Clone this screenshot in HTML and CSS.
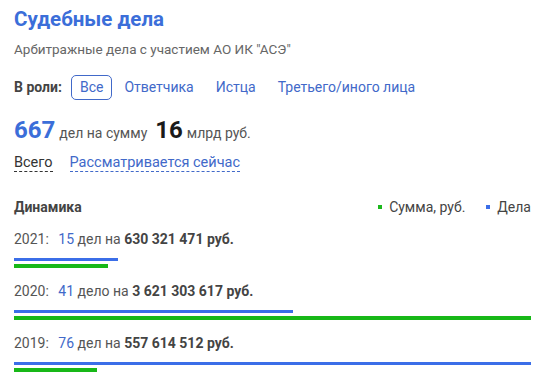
FILE: index.html
```html
<!DOCTYPE html>
<html lang="ru">
<head>
    <meta charset="UTF-8" />
    <title>Судебные дела</title>
    <link rel="stylesheet" href="styles.css">
</head>
<body>
    <section class="cases">
        <h1 class="cases-title">Судебные дела</h1>
        <p class="cases-sub">Арбитражные дела с участием АО ИК "АСЭ"</p>

        <div class="roles">
            <span class="roles-label">В роли:</span>
            <a href="#" class="role active">Все</a>
            <a href="#" class="role">Ответчика</a>
            <a href="#" class="role">Истца</a>
            <a href="#" class="role">Третьего/иного лица</a>
        </div>

        <div class="summary">
            <span class="big blue">667</span>
            <span class="summary-text">дел на сумму</span>
            <span class="big dark">16</span>
            <span class="summary-text">млрд руб.</span>
        </div>

        <div class="tabs">
            <a href="#" class="tab current">Всего</a>
            <a href="#" class="tab">Рассматривается сейчас</a>
        </div>

        <div class="chart-head">
            <span class="chart-title">Динамика</span>
            <div class="legend">
                <span class="legend-item"><i class="dot green"></i>Сумма, руб.</span>
                <span class="legend-item"><i class="dot blue-bg"></i>Дела</span>
            </div>
        </div>

        <div class="year">
            <div class="year-text">2021: <span class="count">15</span> дел на <b>630 321 471 руб.</b></div>
            <div class="bar bar-blue" style="width: 20.1%"></div>
            <div class="bar bar-green" style="width: 18.2%"></div>
        </div>
        <div class="year">
            <div class="year-text">2020: <span class="count">41</span> дело на <b>3 621 303 617 руб.</b></div>
            <div class="bar bar-blue" style="width: 54%"></div>
            <div class="bar bar-green" style="width: 100%"></div>
        </div>
        <div class="year">
            <div class="year-text">2019: <span class="count">76</span> дел на <b>557 614 512 руб.</b></div>
            <div class="bar bar-blue" style="width: 100%"></div>
            <div class="bar bar-green" style="width: 16%"></div>
        </div>
    </section>
</body>
</html>
```

FILE: styles.css
```css
html {
    font: 14px/1.2 "Roboto", "Liberation Sans", sans-serif;
}

body {
    margin: 0;
    padding: 0;
    background-color: #fff;
    color: #555;
}

.cases {
    padding: 7px 15px 10px 14px;
}

.cases-title {
    margin: 0;
    font-size: 20.5px;
    line-height: 24px;
    font-weight: 700;
    color: #3b6ed9;
}

.cases-sub {
    margin: 10px 0 0;
    font-size: 13.5px;
    line-height: 16px;
    color: #666;
}

.roles {
    display: flex;
    align-items: center;
    margin-top: 18px;
    font-size: 14px;
}

.roles-label {
    margin-right: 9px;
    font-weight: 700;
    font-size: 14px;
    color: #444;
}

.role {
    padding: 3px 10px;
    border: 1px solid transparent;
    border-radius: 5px;
    text-decoration: none;
    color: #4169c9;
}

.role.active {
    padding: 3px 8px;
    border-color: #4169c9;
    margin-right: 1px;
}

.summary {
    display: flex;
    align-items: baseline;
    margin-top: 16px;
}

.big {
    font-size: 24px;
    line-height: 28px;
    font-weight: 700;
}

.blue {
    color: #3b6ed9;
}

.dark {
    margin-left: 8px;
    color: #1a1a1a;
}

.summary-text {
    margin-left: 4px;
    font-size: 14px;
    color: #555;
}

.tabs {
    display: flex;
    gap: 17px;
    margin-top: 11px;
    font-size: 14.5px;
}

.tab {
    text-decoration: none;
    color: #4169c9;
    border-bottom: 1px dashed #4169c9;
    line-height: 16px;
}

.tab.current {
    color: #333;
    border-bottom-color: #333;
}

.chart-head {
    display: flex;
    justify-content: space-between;
    align-items: center;
    margin-top: 27px;
}

.chart-title {
    font-size: 14px;
    font-weight: 700;
    color: #444;
}

.legend {
    display: flex;
    gap: 21px;
    font-size: 14px;
    color: #444;
}

.legend-item {
    display: flex;
    align-items: center;
}

.dot {
    display: inline-block;
    width: 4px;
    height: 4px;
    margin-right: 7px;
}

.green {
    background-color: #1cb81c;
}

.blue-bg {
    background-color: #3b6ee8;
}

.year {
    margin-top: 15px;
}

.year-text {
    line-height: 16px;
    font-size: 14px;
    color: #555;
}

.count {
    margin-left: 6px;
    color: #4169c9;
}

.year-text b {
    color: #444;
}

.bar {
    height: 3px;
}

.bar-blue {
    margin-top: 11px;
    background-color: #3b6ee8;
}

.bar-green {
    margin-top: 3px;
    height: 4px;
    background-color: #18b818;
}
```
